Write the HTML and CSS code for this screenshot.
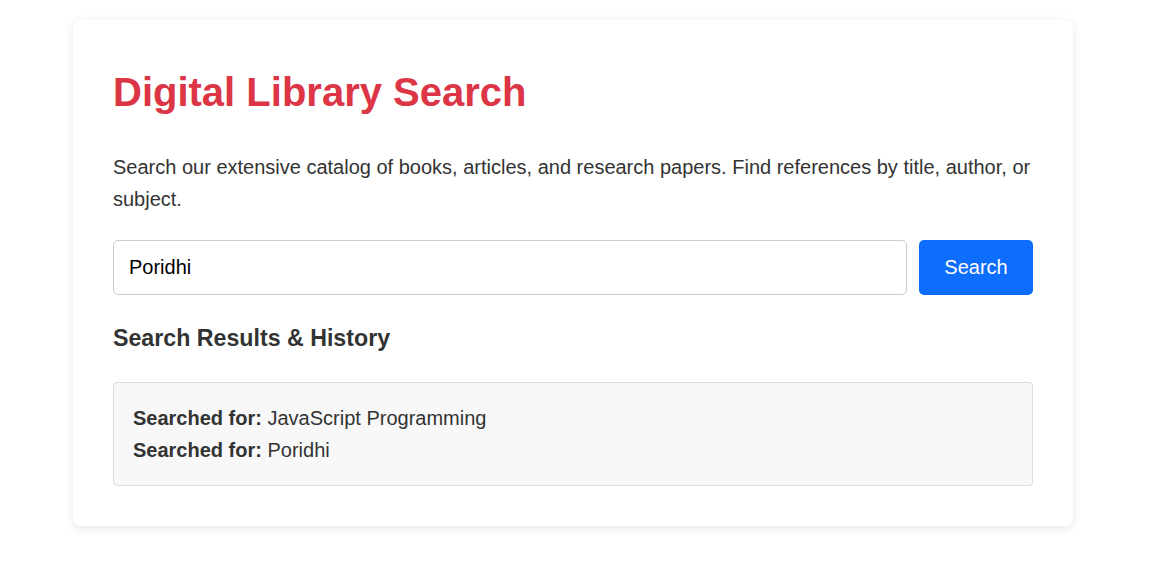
FILE: index.html
```html
<!DOCTYPE html>
<html lang="en">
<head>
<meta charset="utf-8">
<title>Digital Library Search</title>
<link rel="stylesheet" href="styles.css">
</head>
<body>
<div class="card">
  <h1 class="title">Digital Library Search</h1>
  <p class="intro">Search our extensive catalog of books, articles, and research papers. Find references by title, author, or subject.</p>
  <form class="search-row">
    <input class="search-input" type="text" value="Poridhi">
    <button class="search-btn" type="button">Search</button>
  </form>
  <h2 class="section-title">Search Results &amp; History</h2>
  <div class="results">
    <div class="result-line"><strong>Searched for:</strong> JavaScript Programming</div>
    <div class="result-line"><strong>Searched for:</strong> Poridhi</div>
  </div>
</div>
</body>
</html>
```

FILE: styles.css
```css
* { box-sizing: border-box; }
body {
  margin: 0;
  padding: 20px 6px 20px 0;
  background: #ffffff;
  font-family: "Liberation Sans", Arial, sans-serif;
  font-size: 20px;
  line-height: 1.6;
  color: #333333;
}
.card {
  width: 1000px;
  margin: 0 auto;
  background: #ffffff;
  padding: 40px;
  border-radius: 8px;
  box-shadow: 0 2px 10px rgba(0, 0, 0, 0.1);
}
.title {
  margin: 0;
  font-size: 40px;
  font-weight: bold;
  color: #dc3545;
}
.intro {
  margin: 27px 0 25px;
  font-size: 20px;
  line-height: 32px;
}
.search-row {
  display: flex;
  gap: 12px;
  margin: 0;
}
.search-input {
  flex: 1;
  height: 55px;
  padding: 0 15px;
  font-family: inherit;
  font-size: 20px;
  color: #000;
  border: 1px solid #ccc;
  border-radius: 5px;
  outline: none;
}
.search-btn {
  width: 114px;
  height: 55px;
  font-family: inherit;
  font-size: 20px;
  color: #fff;
  background: #0d6efd;
  border: none;
  border-radius: 5px;
}
.section-title {
  margin: 25px 0;
  font-size: 23.2px;
  font-weight: bold;
  line-height: 37px;
}
.results {
  background: #f8f8f8;
  border: 1px solid #ddd;
  border-radius: 4px;
  padding: 19px;
  font-size: 20px;
  line-height: 32px;
}
```
